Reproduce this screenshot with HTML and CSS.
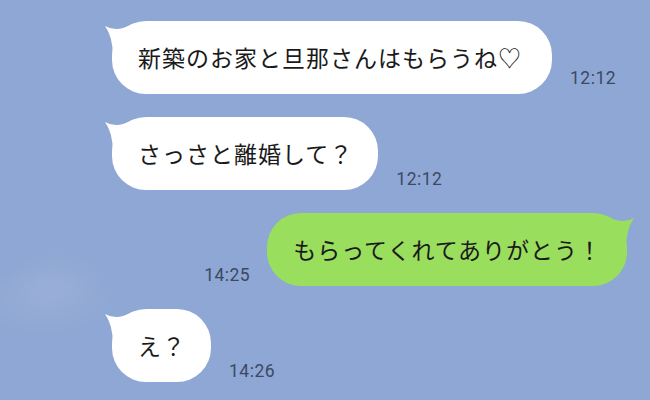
FILE: index.html
```html
<!DOCTYPE html>
<html lang="ja">
<head>
  <meta charset="UTF-8" />
  <title>トーク</title>
  <link rel="stylesheet" href="styles.css">
</head>
<body>
  <!-- talk screen -->
  <div class="chat">
    <div class="row in first">
      <div class="bubble">
        <svg class="tail" viewBox="0 0 30 36" width="30" height="36"><path d="M1 5 Q13 12 28 3 L30 3 L30 36 L9 36 Q9 16 1 5 Z"/></svg>
        <span class="msg">新築のお家と旦那さんはもらうね♡</span>
      </div>
      <span class="time">12:12</span>
    </div>

    <div class="row in">
      <div class="bubble">
        <svg class="tail" viewBox="0 0 30 36" width="30" height="36"><path d="M1 5 Q13 12 28 3 L30 3 L30 36 L9 36 Q9 16 1 5 Z"/></svg>
        <span class="msg">さっさと離婚して？</span>
      </div>
      <span class="time">12:12</span>
    </div>

    <div class="row out">
      <span class="time">14:25</span>
      <div class="bubble green">
        <svg class="tail" viewBox="0 0 30 36" width="30" height="36"><path d="M1 5 Q13 12 28 3 L30 3 L30 36 L9 36 Q9 16 1 5 Z"/></svg>
        <span class="msg">もらってくれてありがとう！</span>
      </div>
    </div>

    <div class="row in">
      <div class="bubble">
        <svg class="tail" viewBox="0 0 30 36" width="30" height="36"><path d="M1 5 Q13 12 28 3 L30 3 L30 36 L9 36 Q9 16 1 5 Z"/></svg>
        <span class="msg">え？</span>
      </div>
      <span class="time">14:26</span>
    </div>
  </div>
</body>
</html>
```

FILE: styles.css
```css
* {
  margin: 0;
  padding: 0;
  box-sizing: border-box;
}

html, body {
  width: 650px;
  height: 400px;
  overflow: hidden;
}

body {
  font-family: "Noto Sans CJK JP", "Noto Sans", sans-serif;
  color: #1a1a1a;
  background-color: #8fa7d4;
  background-image:
    radial-gradient(ellipse 70px 35px at 45px 300px, rgba(255, 255, 255, 0.07), rgba(255, 255, 255, 0)),
    radial-gradient(ellipse 50px 30px at 55px 280px, rgba(255, 255, 255, 0.05), rgba(255, 255, 255, 0));
}

.chat {
  display: flex;
  flex-direction: column;
  gap: 23px;
  padding: 21px 23px 0 112px;
}

.row {
  display: flex;
  align-items: flex-end;
  gap: 18px;
}

.row.out {
  justify-content: flex-end;
  gap: 17px;
}

/* bubbles */
.bubble {
  position: relative;
  background: #fff;
  border-radius: 34px;
  padding: 20px 25px 20px 26px;
  line-height: 33px;
  font-size: 23px;
  letter-spacing: 1px;
  white-space: nowrap;
}

.first .bubble {
  padding-right: 30px;
}

.bubble.green {
  background: #9ade5e;
}

.msg {
  position: relative;
}

.tail {
  position: absolute;
  top: 0;
  left: -8px;
  fill: #fff;
}

.green .tail {
  left: auto;
  right: -8px;
  transform: scaleX(-1);
  fill: #9ade5e;
}

/* timestamps */
.time {
  font-family: Roboto, "Liberation Sans", sans-serif;
  font-size: 17.5px;
  letter-spacing: 0.5px;
  color: #3b4964;
  line-height: 20px;
  margin-bottom: 1px;
}

.first .time {
  margin-bottom: 6px;
}
```
